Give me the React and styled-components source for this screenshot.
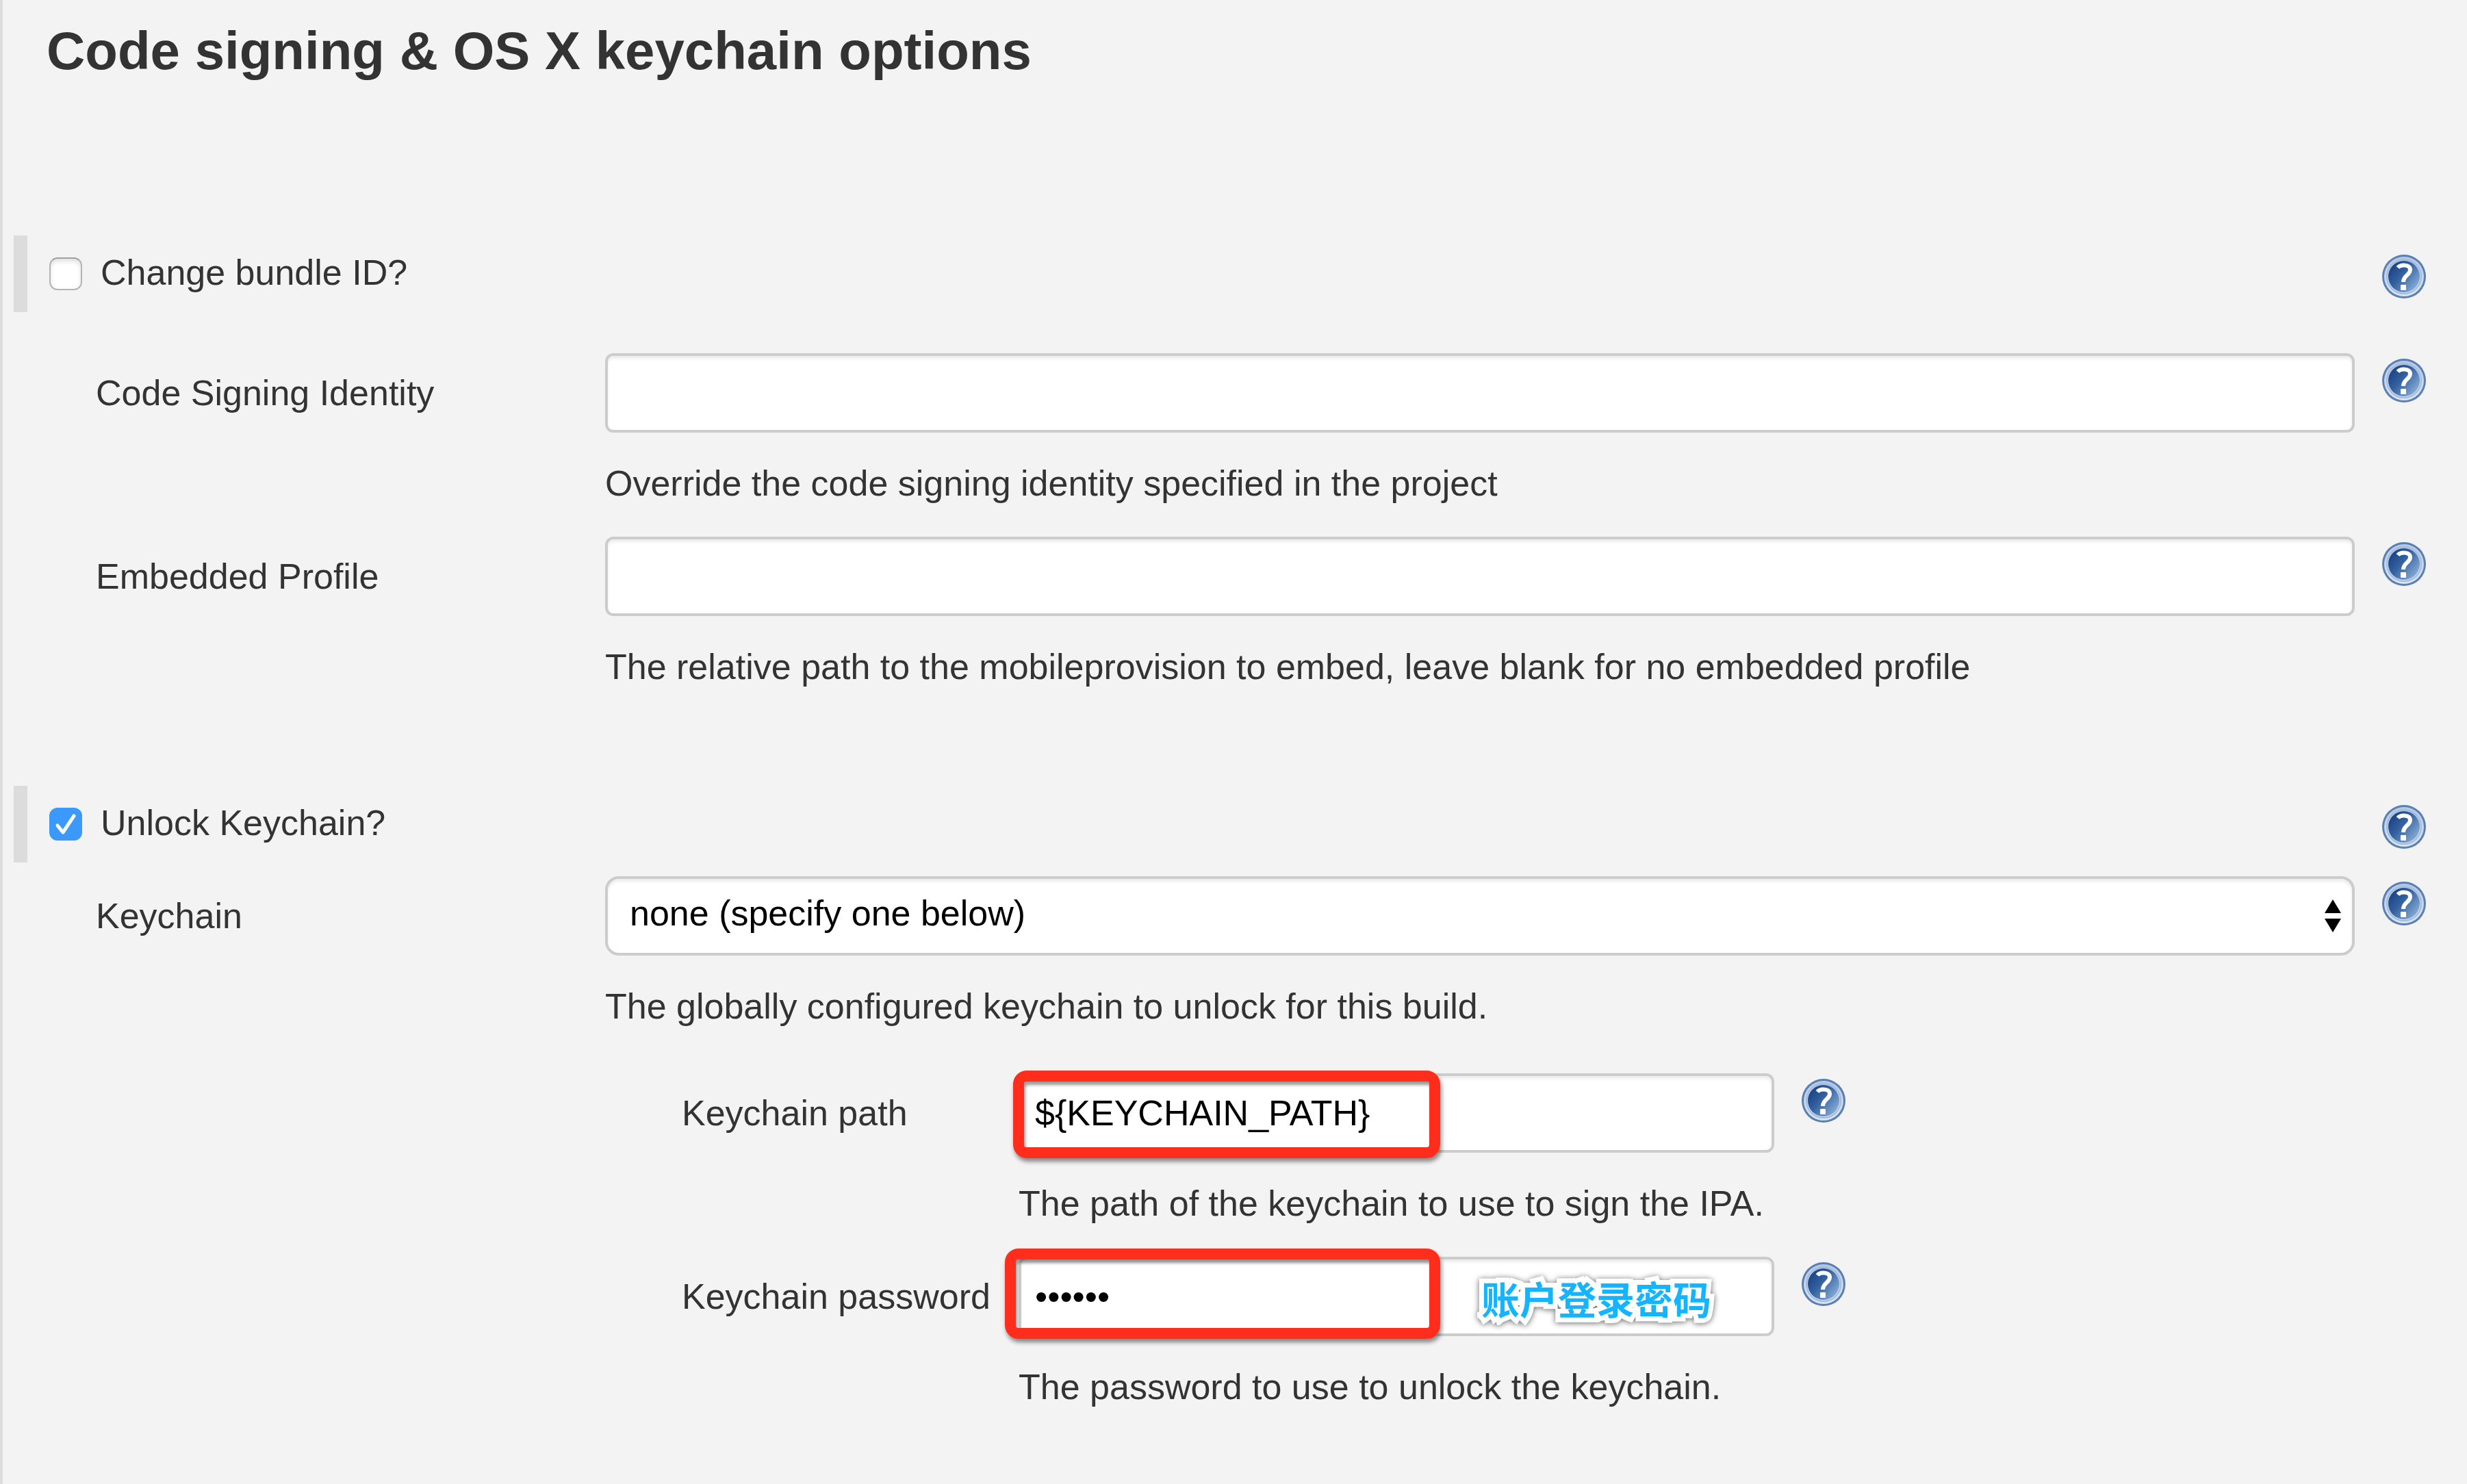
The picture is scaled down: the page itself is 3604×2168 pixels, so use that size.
import React, { useState } from "react";
import styled, { createGlobalStyle } from "styled-components";

const GlobalStyle = createGlobalStyle`
  *, *::before, *::after { box-sizing: border-box; }
  body {
    margin: 0;
    background: #f3f3f3;
    color: #333;
    font: 52px/60px "Liberation Sans", Arial, Helvetica, sans-serif;
  }
`;

const Page = styled.main`
  min-height: 100vh;
  padding-bottom: 60px;
  border-left: 4px solid #dcdcdc;
`;

const Title = styled.h1`
  margin: 0;
  padding: 24px 64px 220px;
  font-size: 78px;
  line-height: 100px;
  font-weight: 700;
`;

const Section = styled.section`
  padding-bottom: ${(p) => (p.$last ? "0" : "96px")};
`;

const ToggleRow = styled.div`
  display: flex;
  align-items: flex-start;
  justify-content: space-between;
  height: 112px;
  margin-left: 16px;
  padding: 0 60px 0 32px;
  border-left: 20px solid #dcdcdc;
`;

const ToggleLabel = styled.label`
  display: flex;
  align-items: center;
  gap: 27px;
  height: 112px;
`;

const ToggleText = styled.span`
  padding-bottom: 4px;
`;

const CheckWrap = styled.span`
  display: grid;
  width: 48px;
  height: 48px;
  > * { grid-area: 1 / 1; }
`;

const CheckBox = styled.input`
  appearance: none;
  width: 48px;
  height: 48px;
  margin: 0;
  border: 2px solid #b4b4b4;
  border-top-color: #a0a0a0;
  border-radius: 12px;
  background: #fff;
  box-shadow: inset 0 4px 6px rgba(0, 0, 0, 0.12);
  &:checked {
    border-color: #3b99fc;
    background: #3b99fc;
    box-shadow: none;
  }
`;

const CheckMark = styled.svg`
  width: 48px;
  height: 48px;
  pointer-events: none;
`;

const Fields = styled.div`
  padding: ${(p) => (p.$tight ? "20px" : "60px")} 60px 0 136px;
`;

const FieldRow = styled.div`
  display: grid;
  grid-template-columns: ${(p) => (p.$nested ? "492px" : "744px")} minmax(0, 1fr) 64px;
  align-items: start;
`;

const NestedFields = styled.div`
  padding: 20px 908px 0 992px;
`;

const FieldLabel = styled.label`
  padding-top: 28px;
  white-space: nowrap;
`;

const Control = styled.div`
  position: relative;
  display: grid;
  margin-right: 40px;
`;

const Hint = styled.p`
  grid-column: 2 / -1;
  margin: 0;
  padding: 44px 0 48px;
`;

const TextBox = styled.input`
  width: 100%;
  height: 116px;
  margin: 0;
  padding: 0 20px;
  border: 4px solid #ccc;
  border-radius: 12px;
  background: #fff;
  box-shadow: inset 0 4px 4px rgba(0, 0, 0, 0.075);
  color: #000;
  font: inherit;
  outline: none;
`;

const SelectBox = styled.select`
  appearance: none;
  grid-area: 1 / 1;
  width: 100%;
  height: 116px;
  margin: 0;
  padding: 0 80px 8px 32px;
  border: 4px solid #ccc;
  border-radius: 20px;
  background: #fff;
  box-shadow: inset 0 4px 4px rgba(0, 0, 0, 0.075);
  color: #000;
  font: inherit;
  outline: none;
`;

const Arrows = styled.svg`
  grid-area: 1 / 1;
  place-self: center end;
  width: 24px;
  height: 48px;
  margin-right: 20px;
  pointer-events: none;
`;

const HelpButton = styled.button`
  width: 64px;
  height: 64px;
  margin: ${(p) => (p.$toggle ? "28px" : "8px")} 0 0;
  padding: 0;
  border: 0;
  background: none;
  svg { display: block; width: 64px; height: 64px; }
`;

const Highlight = styled.div`
  position: absolute;
  pointer-events: none;
  border: 16px solid #ff2d1c;
  border-radius: 20px;
  box-shadow: 2px 5px 6px rgba(0, 0, 0, 0.45), inset 2px 5px 4px rgba(0, 0, 0, 0.4);
  inset: ${(p) => (p.$wide ? "-12px auto auto -20px" : "-4px auto auto -8px")};
  width: ${(p) => (p.$wide ? "636px" : "624px")};
  height: ${(p) => (p.$wide ? "132px" : "128px")};
`;

const Note = styled.span`
  position: absolute;
  top: 32px;
  left: 676px;
  color: #14b4ff;
  font: 700 56px/56px "Noto Sans CJK SC", sans-serif;
  white-space: nowrap;
  -webkit-text-stroke: 14px #fff;
  paint-order: stroke fill;
  filter: drop-shadow(0 1px 4px rgba(0, 0, 0, 0.6));
  pointer-events: none;
`;

function Help({ topic, toggle }) {
  return (
    <HelpButton type="button" aria-label={`Help for ${topic}`} $toggle={toggle}>
      <svg viewBox="0 0 64 64" aria-hidden="true">
        <defs>
          <linearGradient id="helpFill" x1="0.1" y1="0.2" x2="0.9" y2="0.85">
            <stop offset="0" stopColor="#1c4588" />
            <stop offset="0.4" stopColor="#34619f" />
            <stop offset="1" stopColor="#86acd6" />
          </linearGradient>
          <linearGradient id="helpRing" x1="0" y1="0" x2="0" y2="1">
            <stop offset="0" stopColor="#b4c8e4" />
            <stop offset="1" stopColor="#d9e5f4" />
          </linearGradient>
        </defs>
        <circle cx="32" cy="32" r="32" fill="#5a7fb5" />
        <circle cx="32" cy="32" r="29" fill="url(#helpRing)" />
        <circle cx="32" cy="32" r="25" fill="none" stroke="#a3badb" strokeWidth="2" />
        <circle cx="32" cy="32" r="23" fill="url(#helpFill)" />
        <path
          d="M23 19 C27 14 41 14 41 22 C41 30 31 30 31 40"
          fill="none"
          stroke="#fff"
          strokeWidth="6"
        />
        <rect x="27" y="44" width="8" height="8" rx="1" fill="#fff" />
      </svg>
    </HelpButton>
  );
}

function Toggle({ id, label, initial }) {
  const [on, setOn] = useState(initial);
  return (
    <ToggleRow>
      <ToggleLabel htmlFor={id}>
        <CheckWrap>
          <CheckBox id={id} type="checkbox" checked={on} onChange={(e) => setOn(e.target.checked)} />
          {on && (
            <CheckMark viewBox="0 0 48 48" aria-hidden="true">
              <path
                d="M12 26 L20 36 L36 12"
                fill="none"
                stroke="#fff"
                strokeWidth="5"
                strokeLinecap="round"
                strokeLinejoin="round"
              />
            </CheckMark>
          )}
        </CheckWrap>
        <ToggleText>{label}</ToggleText>
      </ToggleLabel>
      <Help topic={label} toggle />
    </ToggleRow>
  );
}

function Field({ id, label, hint, nested, children }) {
  return (
    <FieldRow $nested={nested}>
      <FieldLabel htmlFor={id}>{label}</FieldLabel>
      <Control>{children}</Control>
      <Help topic={label} />
      <Hint>{hint}</Hint>
    </FieldRow>
  );
}

export default function App() {
  return (
    <Page>
      <GlobalStyle />
      <Title>Code signing &amp; OS X keychain options</Title>

      <Section>
        <Toggle id="change-bundle" label="Change bundle ID?" initial={false} />
        <Fields>
          <Field
            id="identity"
            label="Code Signing Identity"
            hint="Override the code signing identity specified in the project"
          >
            <TextBox id="identity" type="text" />
          </Field>
          <Field
            id="profile"
            label="Embedded Profile"
            hint="The relative path to the mobileprovision to embed, leave blank for no embedded profile"
          >
            <TextBox id="profile" type="text" />
          </Field>
        </Fields>
      </Section>

      <Section $last>
        <Toggle id="unlock" label="Unlock Keychain?" initial />
        <Fields $tight>
          <Field
            id="keychain"
            label="Keychain"
            hint="The globally configured keychain to unlock for this build."
          >
            <SelectBox id="keychain" defaultValue="none">
              <option value="none">none (specify one below)</option>
            </SelectBox>
            <Arrows viewBox="0 0 24 48" aria-hidden="true">
              <path d="M12 0 L24 20 H0 Z M0 28 H24 L12 48 Z" fill="#000" />
            </Arrows>
          </Field>
        </Fields>
        <NestedFields>
          <Field
            id="path"
            label="Keychain path"
            hint="The path of the keychain to use to sign the IPA."
            nested
          >
            <TextBox id="path" type="text" defaultValue="${KEYCHAIN_PATH}" />
            <Highlight />
          </Field>
          <Field
            id="password"
            label="Keychain password"
            hint="The password to use to unlock the keychain."
            nested
          >
            <TextBox id="password" type="password" defaultValue="secret" />
            <Highlight $wide />
            <Note>账户登录密码</Note>
          </Field>
        </NestedFields>
      </Section>
    </Page>
  );
}
